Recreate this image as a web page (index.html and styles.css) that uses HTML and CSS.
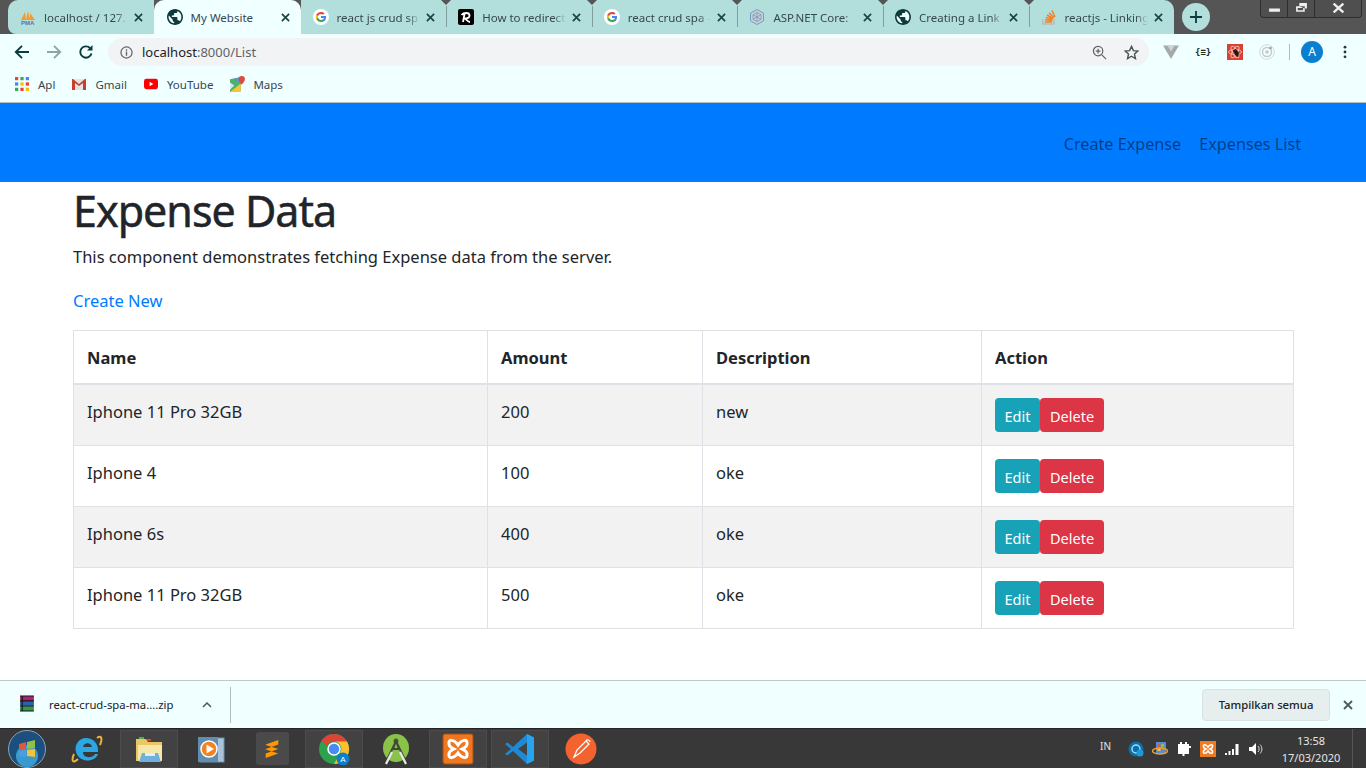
FILE: index.html
```html
<!DOCTYPE html>
<html lang="en">
<head>
    <meta charset="UTF-8">
    <title>My Website</title>
    <link rel="stylesheet" href="styles.css">
</head>
<body>
    <svg class="defs" width="0" height="0">
        <symbol id="i-close" viewBox="0 0 10 10"><path d="M1 1l8 8M9 1l-8 8" fill="none" stroke="currentColor" stroke-width="1.9"/></symbol>
        <symbol id="i-globe" viewBox="2 2 20 20"><circle cx="12" cy="12" r="8.5" fill="#f0ffff"/><path d="M12 2C6.48 2 2 6.48 2 12s4.48 10 10 10 10-4.48 10-10S17.52 2 12 2zm-1 17.93c-3.95-.49-7-3.85-7-7.93 0-.62.08-1.21.21-1.79L9 15v1c0 1.1.9 2 2 2v1.93zm6.9-2.54c-.26-.81-1-1.39-1.9-1.39h-1v-3c0-.55-.45-1-1-1H8v-2h2c.55 0 1-.45 1-1V7h2c1.1 0 2-.9 2-2v-.41c2.93 1.19 5 4.06 5 7.41 0 2.08-.8 3.97-2.1 5.39z" fill="#0d3b3b"/></symbol>
        <symbol id="i-google" viewBox="0 0 16 16"><circle cx="8" cy="8" r="8" fill="#fff"/><path d="M13 8.100c0-.4 0-.7-.1-1H8v2h2.900c-.1.7-.5 1.200-1.100 1.600v1.300h1.700c1-.9 1.500-2.300 1.500-3.900z" fill="#4285f4"/><path d="M8 13c1.400 0 2.600-.5 3.500-1.300l-1.700-1.300c-.5.3-1.100.5-1.800.5-1.400 0-2.500-.9-2.900-2.100H3.300v1.300C4.200 11.900 6 13 8 13z" fill="#34a853"/><path d="M5.100 8.800C4.900 8.200 4.900 7.700 5.100 7.100V5.800H3.300c-.6 1.400-.6 2.900 0 4.300z" fill="#fbbc05"/><path d="M8 5c.8 0 1.500.3 2 .8l1.500-1.500C10.600 3.500 9.400 3 8 3 6 3 4.200 4.100 3.300 5.800l1.800 1.300C5.500 5.900 6.600 5 8 5z" fill="#ea4335"/></symbol>
    </svg>

    <header class="chrome">
        <div class="tabstrip">
            <div class="tab">
                <svg class="fav" viewBox="0 0 16 16"><path d="M1 11L5 3l1 8zM6 11l2-9 2 9zM10 11V4l5 7z" fill="#f29a2e"/><text x="1" y="15.5" font-size="6" font-weight="700" fill="#5b6fa8" font-family="Liberation Sans">PMA</text></svg>
                <span class="tab-title">localhost / 127.</span>
                <svg class="tab-x"><use href="#i-close"/></svg>
            </div>
            <div class="tab tab-active">
                <svg class="fav"><use href="#i-globe"/></svg>
                <span class="tab-title tab-title-full">My Website</span>
                <svg class="tab-x"><use href="#i-close"/></svg>
            </div>
            <div class="tab">
                <svg class="fav"><use href="#i-google"/></svg>
                <span class="tab-title">react js crud sp</span>
                <svg class="tab-x"><use href="#i-close"/></svg>
            </div>
            <div class="tab tab-sep">
                <svg class="fav" viewBox="0 0 16 16"><rect width="16" height="16" rx="2" fill="#000"/><path d="M5 13l1.500-8M3.500 6c2-2.500 8-3 8 .5 0 2.500-3 3-5 3 2 .5 3 3.500 5.500 3.500" fill="none" stroke="#fff" stroke-width="1.8"/></svg>
                <span class="tab-title">How to redirect</span>
                <svg class="tab-x"><use href="#i-close"/></svg>
            </div>
            <div class="tab tab-sep">
                <svg class="fav"><use href="#i-google"/></svg>
                <span class="tab-title">react crud spa -</span>
                <svg class="tab-x"><use href="#i-close"/></svg>
            </div>
            <div class="tab tab-sep">
                <svg class="fav" viewBox="0 0 16 16"><path d="M8 .5l6.500 3.700v7.600L8 15.500l-6.500-3.700V4.200z" fill="#c3d4dc" stroke="#7d97b5"/><path d="M8 3.500l4 2.200v4.600l-4 2.200-4-2.200V5.700zM8 3.500v9M4 5.700l8 4.600M12 5.700l-8 4.600" fill="none" stroke="#7d97b5" stroke-width=".8"/></svg>
                <span class="tab-title">ASP.NET Core:</span>
                <svg class="tab-x"><use href="#i-close"/></svg>
            </div>
            <div class="tab tab-sep">
                <svg class="fav"><use href="#i-globe"/></svg>
                <span class="tab-title">Creating a Link</span>
                <svg class="tab-x"><use href="#i-close"/></svg>
            </div>
            <div class="tab tab-sep tab-last">
                <svg class="fav" viewBox="0 0 16 16"><path d="M2 10v5h11v-5" fill="none" stroke="#bcbbbb" stroke-width="1.5"/><path d="M4 13h7M4.200 10.800l7 .6M4.800 8.500l6.800 1.800M6 6l6 3.500M8 3.800l5 5M11 1.500l3 6.500" fill="none" stroke="#f48024" stroke-width="1.5"/></svg>
                <span class="tab-title">reactjs - Linking</span>
                <svg class="tab-x"><use href="#i-close"/></svg>
            </div>
            <button class="new-tab"><svg viewBox="0 0 14 14"><path d="M7 1v12M1 7h12" stroke="#0d3b3b" stroke-width="1.8"/></svg></button>
            <div class="win-btns">
                <span class="win-btn win-min"><svg viewBox="0 0 12 12"><rect x="1" y="6" width="10" height="3" fill="#eee"/></svg></span>
                <span class="win-btn win-max"><svg viewBox="0 0 12 12"><path d="M4 1h7v5H9v3H1V4h3zM4 4h5v2M2.500 5.500v2h5v-2z" fill="#eee" fill-rule="evenodd"/></svg></span>
                <span class="win-btn win-shut"><svg viewBox="0 0 12 12"><path d="M1.500 1.500l9 8M10.500 1.500l-9 8" stroke="#eee" stroke-width="2.2"/></svg></span>
            </div>
        </div>

        <div class="toolbar">
            <svg class="tool" viewBox="0 0 16 16"><path d="M15 8H2M8 1.800L1.800 8 8 14.200" fill="none" stroke="#0d3b3b" stroke-width="1.9"/></svg>
            <svg class="tool tool-off" viewBox="0 0 16 16"><path d="M1 8h13M8 1.800L14.200 8 8 14.200" fill="none" stroke="#8fa5a5" stroke-width="1.9"/></svg>
            <svg class="tool" viewBox="0 0 16 16"><path d="M13.500 9.500A5.700 5.700 0 1 1 12 4" fill="none" stroke="#0d3b3b" stroke-width="1.9"/><path d="M14.500 1v5.500H9z" fill="#0d3b3b"/></svg>
            <div class="omnibox">
                <svg class="omni-info" viewBox="0 0 14 14"><circle cx="7" cy="7" r="6" fill="none" stroke="#5f6368" stroke-width="1.3"/><path d="M7 6v4.500M7 3.500v1.500" stroke="#5f6368" stroke-width="1.4"/></svg>
                <span class="url">localhost<span class="url-rest">:8000/List</span></span>
                <svg class="omni-zoom" viewBox="0 0 16 16"><circle cx="6.500" cy="6.500" r="5" fill="none" stroke="#5f6368" stroke-width="1.3"/><path d="M10.500 10.500L15 15M4 6.500h5M6.500 4v5" stroke="#5f6368" stroke-width="1.3"/></svg>
                <svg class="omni-star" viewBox="0 0 16 16"><path d="M8 1.500l2 4.500 4.800.5-3.600 3.200 1 4.800L8 12l-4.200 2.500 1-4.800L1.200 6.500 6 6z" fill="none" stroke="#4a5355" stroke-width="1.5"/></svg>
            </div>
            <div class="exts">
                <svg class="ext" viewBox="0 0 16 16"><path d="M0 1.500h16L8 15z" fill="#a6a9a9"/><path d="M4.500 1.500h7L8 7.500z" fill="#d0d4d4"/></svg>
                <span class="ext ext-json">{≡}</span>
                <svg class="ext" viewBox="0 0 16 16"><rect width="16" height="16" fill="#d7412f"/><g fill="none" stroke="#f5b5ab"><ellipse cx="8" cy="8" rx="6.500" ry="2.500"/><ellipse cx="8" cy="8" rx="6.500" ry="2.500" transform="rotate(60 8 8)"/><ellipse cx="8" cy="8" rx="6.500" ry="2.500" transform="rotate(120 8 8)"/></g><path d="M6 6l3-1 3 4-1 4-3-2z" fill="#2b1512"/></svg>
                <svg class="ext" viewBox="0 0 16 16"><circle cx="8" cy="8" r="7.300" fill="none" stroke="#d5d8d8"/><circle cx="8" cy="8" r="4.500" fill="none" stroke="#c5c9c9" stroke-width="1.4"/><circle cx="8" cy="8" r="1.800" fill="#c5c9c9"/><circle cx="11.500" cy="4" r="1.300" fill="#9ba1a1"/></svg>
                <span class="tool-divider"></span>
                <span class="avatar">A</span>
                <svg class="menu-dots" viewBox="0 0 4 16"><circle cx="2" cy="2.500" r="1.600"/><circle cx="2" cy="8" r="1.600"/><circle cx="2" cy="13.500" r="1.600"/></svg>
            </div>
        </div>

        <div class="bookmarks">
            <a class="bm">
                <svg class="bm-ic" viewBox="0 0 13 13"><g fill="#ea4335"><rect width="3" height="3"/><rect x="5" y="5" width="3" height="3" fill="#fbbc05"/></g><rect x="5" width="3" height="3" fill="#34a853"/><rect x="10" width="3" height="3" fill="#4285f4"/><rect y="5" width="3" height="3" fill="#4285f4"/><rect x="10" y="5" width="3" height="3" fill="#ea4335"/><rect y="10" width="3" height="3" fill="#34a853"/><rect x="5" y="10" width="3" height="3" fill="#ea4335"/><rect x="10" y="10" width="3" height="3" fill="#fbbc05"/></svg>
                Apl
            </a>
            <a class="bm">
                <svg class="bm-ic" viewBox="0 0 14 12"><path d="M0 1h14v11H0z" fill="#e4e4e4"/><path d="M0 1v11h3V5l4 3 4-3v7h3V1h-1L7 6 1 1z" fill="#c5402f"/></svg>
                Gmail
            </a>
            <a class="bm">
                <svg class="bm-ic" viewBox="0 0 15 11"><rect width="15" height="11" rx="2.500" fill="#f00"/><path d="M6 3l4 2.500L6 8z" fill="#fff"/></svg>
                YouTube
            </a>
            <a class="bm">
                <svg class="bm-ic bm-maps" viewBox="0 0 15 15"><path d="M0 3l10-2v13L0 15z" fill="#4db36a"/><path d="M0 15l10-8v8z" fill="#f6c532"/><path d="M0 6l4 3-4 4z" fill="#dbe7f3"/><path d="M4 2l6 6V2z" fill="#5a94e8"/><path d="M11 0a3 3 0 0 1 3 3c0 2-3 5-3 5s-3-3-3-5a3 3 0 0 1 3-3z" fill="#dd4b3e"/></svg>
                Maps
            </a>
        </div>
    </header>

    <nav class="site-nav">
        <a class="nav-link">Create Expense</a>
        <a class="nav-link">Expenses List</a>
    </nav>

    <main class="content">
        <h1>Expense Data</h1>
        <p class="lead">This component demonstrates fetching Expense data from the server.</p>
        <a class="create-link">Create New</a>

        <table class="data-table">
            <colgroup>
                <col class="col-name">
                <col class="col-amount">
                <col class="col-desc">
                <col>
            </colgroup>
            <thead>
                <tr><th>Name</th><th>Amount</th><th>Description</th><th>Action</th></tr>
            </thead>
            <tbody>
                <tr>
                    <td>Iphone 11 Pro 32GB</td><td>200</td><td>new</td>
                    <td class="cell-actions"><button class="btn btn-edit">Edit</button><button class="btn btn-delete">Delete</button></td>
                </tr>
                <tr>
                    <td>Iphone 4</td><td>100</td><td>oke</td>
                    <td class="cell-actions"><button class="btn btn-edit">Edit</button><button class="btn btn-delete">Delete</button></td>
                </tr>
                <tr>
                    <td>Iphone 6s</td><td>400</td><td>oke</td>
                    <td class="cell-actions"><button class="btn btn-edit">Edit</button><button class="btn btn-delete">Delete</button></td>
                </tr>
                <tr>
                    <td>Iphone 11 Pro 32GB</td><td>500</td><td>oke</td>
                    <td class="cell-actions"><button class="btn btn-edit">Edit</button><button class="btn btn-delete">Delete</button></td>
                </tr>
            </tbody>
        </table>
    </main>

    <div class="download-bar">
        <svg class="dl-icon" viewBox="0 0 16 16"><rect x="1" y="1" width="13" height="4.500" fill="#a8246e"/><rect x="1" y="5.700" width="13" height="4.500" fill="#2d5fb0"/><rect x="1" y="10.500" width="13" height="4.500" fill="#2f9a4a"/><path d="M1 1h13M1 5.500h13M1 10.300h13M1 15h13M3 1v14" stroke="#111" fill="none"/></svg>
        <span class="dl-name">react-crud-spa-ma....zip</span>
        <svg class="dl-chevron" viewBox="0 0 10 6"><path d="M1 5l4-4 4 4" fill="none" stroke="#4a5a5a" stroke-width="1.5"/></svg>
        <span class="dl-divider"></span>
        <button class="dl-all">Tampilkan semua</button>
        <svg class="dl-close"><use href="#i-close"/></svg>
    </div>

    <footer class="taskbar">
        <svg class="orb" viewBox="0 0 38 38">
            <circle cx="19" cy="19" r="18.5" fill="#1c4f7d" stroke="#8aa3b5"/>
            <circle cx="19" cy="26" r="11" fill="#3a9ad0"/>
            <path d="M11 14l7-2v7l-7 1z" fill="#e2563a"/><path d="M19 12l8-2v8l-8 1z" fill="#8fc04a"/><path d="M11 21l7-1v7l-7-1z" fill="#4c9ee0"/><path d="M19 20l8-1v8l-8-1z" fill="#f4c33d"/>
        </svg>
        <span class="task task-plain">
            <svg class="task-ic" viewBox="0 0 32 32"><path d="M26 5c4-3 6 0 3 7M7 26c-5 5-7 2-4-5" fill="none" stroke="#e8b53a" stroke-width="2"/><path fill-rule="evenodd" d="M15 5c7 0 12 5 12 12v2H12c0 6 9 7 12 2h3c-3 9-19 9-22-2-2-7 3-14 10-14zM12 14h9c-1-5-8-5-9 0z" fill="#2ba7e6"/></svg>
        </span>
        <span class="task">
            <svg class="task-ic" viewBox="0 0 32 32"><path d="M3 6h10l2 3h14v19H3z" fill="#e9c766"/><path d="M5 12h24v16H5z" fill="#f7e7a8"/><path d="M9 20h16l3 9H6z" fill="#6fb1dd"/><rect x="12" y="20" width="10" height="3" fill="#dfeefa"/><rect x="6" y="4" width="5" height="2" fill="#4db04a"/><rect x="14" y="6" width="4" height="2" fill="#d9482c"/></svg>
        </span>
        <span class="task task-plain">
            <svg class="task-ic" viewBox="0 0 32 32"><rect x="5" y="5" width="24" height="24" fill="#a9c4da" stroke="#6f93b0"/><rect x="3" y="4" width="20" height="25" fill="#5f8db3"/><circle cx="14" cy="16" r="8" fill="#f4821f" stroke="#fff" stroke-width="1.5"/><path d="M11.500 11.500l7.500 4.500-7.500 4.500z" fill="#fff"/></svg>
        </span>
        <span class="task task-plain">
            <span class="sublime">
                <svg viewBox="0 0 20 24"><path d="M3 7l14-5v5L3 12zM17 12L3 7.500v5l14 4.500zM3 17l14-5v5L3 22z" fill="#ff9800"/></svg>
            </span>
        </span>
        <span class="task">
            <svg class="task-ic" viewBox="0 0 32 32"><circle cx="16" cy="16" r="15" fill="#2da24c"/><path d="M16 1a15 15 0 0 1 13 7.500H16a7.500 7.500 0 0 0-7 4.800L3.500 8A15 15 0 0 1 16 1z" fill="#db4437"/><path d="M29 8.500A15 15 0 0 1 16 31l6.500-11.500A7.500 7.500 0 0 0 16 8.500z" fill="#fbc02d"/><circle cx="16" cy="16" r="6" fill="#4a8af4" stroke="#fff" stroke-width="1.5"/><circle cx="25" cy="26" r="6.500" fill="#0b7fce"/><text x="25" y="29" font-size="8" fill="#fff" text-anchor="middle" font-family="Liberation Sans">A</text></svg>
        </span>
        <span class="task task-plain">
            <svg class="task-ic" viewBox="0 0 32 32"><ellipse cx="16" cy="15" rx="13" ry="14" fill="#8bc34a"/><circle cx="16" cy="8" r="2.500" fill="#4b5b3c"/><path d="M16 8l-3 8h6zM7 27l9-19 9 19" fill="none" stroke="#3f4a39" stroke-width="2"/><path d="M6 31l6-12M26 31l-6-12" stroke="#e8ece6" stroke-width="2.2"/></svg>
        </span>
        <span class="task">
            <svg class="task-ic" viewBox="0 0 32 32"><rect x="1" y="1" width="30" height="30" rx="2" fill="#f0761f" stroke="#a34f16"/><path d="M16 12C12 6 6 6 7 11c0 3 3 4 5 5-2 1-5 2-5 5-1 5 5 5 9-1 4 6 10 6 9 1 0-3-3-4-5-5 2-1 5-2 5-5 1-5-5-5-9 1z" fill="none" stroke="#fff" stroke-width="3"/></svg>
        </span>
        <span class="task">
            <svg class="task-ic" viewBox="0 0 32 32"><path d="M23 1l7 3.500v23L23 31 9 18l-5.500 4.500L1 21l6-5-6-5 2.500-1.500L9 14zM23 9.500L14 16l9 6.500z" fill="#1e8ad6" fill-rule="evenodd"/><path d="M23 1l7 3.500v23L23 31z" fill="#27a4ee"/></svg>
        </span>
        <span class="task task-plain">
            <svg class="task-ic" viewBox="0 0 32 32"><circle cx="16" cy="16" r="15.5" fill="#f4622f"/><path d="M9 24l3-7 9-9 3 3-9 9zM21 8c1-2 4-1 4 1" fill="none" stroke="#fff" stroke-width="1.3"/></svg>
        </span>

        <div class="tray">
            <span class="tray-lang">IN</span>
            <svg class="tray-ic" viewBox="0 0 16 16"><circle cx="8" cy="8" r="7.5" fill="#0d6fa8"/><circle cx="8" cy="8" r="4" fill="none" stroke="#9fdcf7" stroke-width="1.5"/><circle cx="12" cy="12" r="3.5" fill="#1a9ad6"/></svg>
            <svg class="tray-ic" viewBox="0 0 16 16"><rect x="4" y="1" width="10" height="12" fill="#4d8fd8"/><rect x="5.500" y="3" width="3" height="3" fill="#e2563a"/><rect x="9" y="3" width="3" height="3" fill="#8fc04a"/><rect x="5.500" y="7" width="3" height="3" fill="#f4c33d"/><ellipse cx="8" cy="10" rx="7.5" ry="3" fill="none" stroke="#f39c2d" stroke-width="1.5"/></svg>
            <svg class="tray-ic" viewBox="0 0 16 16"><path d="M3 4h9v8H3zM5 1v3M10 1v3M7.500 12v3" fill="none" stroke="#fff" stroke-width="2"/><path d="M12 5h3v2h-3z" fill="#fff"/><rect x="4" y="5" width="7" height="6" fill="#fff"/></svg>
            <svg class="tray-ic" viewBox="0 0 16 16"><rect width="16" height="16" fill="#ef7a22"/><path d="M8 6C6 3 3 3 3.500 5.500 3.500 7 5 7.500 6 8 5 8.500 3.500 9 3.500 10.500 3 13 6 13 8 10c2 3 5 3 4.500.5 0-1.500-1.500-2-2.500-2.500 1-.5 2.500-1 2.500-2.500C13 3 10 3 8 6z" fill="none" stroke="#fff" stroke-width="1.6"/></svg>
            <svg class="tray-ic" viewBox="0 0 16 16"><path d="M1 12h2v2H1zM4.500 10h2v4h-2zM8 8h2v6H8zM11.500 3h3v11h-3z" fill="#fff"/></svg>
            <svg class="tray-ic" viewBox="0 0 16 16"><path d="M1 6h3l4-4v12l-4-4H1z" fill="#fff"/><path d="M10 5c1.500 1.500 1.500 4.500 0 6M12 3.500c2.500 2.500 2.500 6.500 0 9" fill="none" stroke="#ddd"/></svg>
            <div class="clock"><span>13:58</span><span>17/03/2020</span></div>
            <span class="show-desktop"></span>
        </div>
    </footer>
</body>
</html>
```

FILE: styles.css
```css
/* General Reset */
body {
    margin: 0;
    height: 768px;
    overflow: hidden;
    display: flex;
    flex-direction: column;
    font-family: "Noto Sans", "Open Sans", sans-serif;
    background-color: #fff;
    color: #212529;
}

.defs {
    position: absolute;
}

svg {
    display: block;
    flex: none;
}

/* Browser tabs */
.chrome {
    background-color: #f0ffff;
    border-bottom: 1px solid #b5bcbc;
}

.tabstrip {
    height: 34px;
    display: flex;
    padding-left: 8px;
    background-color: #555;
    position: relative;
}

.tab {
    width: 145.6px;
    box-sizing: border-box;
    padding: 0 11px 0 12px;
    display: flex;
    align-items: center;
    background-color: #b2dfdc;
    color: #0d3b3b;
    position: relative;
}

.tabstrip > .tab:first-child {
    border-radius: 10px 0 0 8px;
}

.tab-active {
    background-color: #f0ffff;
    border-radius: 10px 10px 0 0;
    width: 147px;
    padding-left: 13px;
}

.tab-sep::before {
    content: "";
    position: absolute;
    left: 0;
    top: 6px;
    bottom: 7px;
    border-left: 1px solid #7f9e9c;
}

.tab-sep::after {
    content: "";
    position: absolute;
    left: -5px;
    top: 0;
    border: 5px solid transparent;
    border-top-color: #555;
    border-bottom-width: 0;
}

.tab-last {
    border-radius: 0 10px 0 0;
}

.fav {
    width: 16px;
    height: 16px;
}

.tab-title {
    flex: 1;
    min-width: 0;
    margin-left: 8px;
    font-size: 11.5px;
    white-space: nowrap;
    color: #37474f;
    -webkit-mask-image: linear-gradient(to right, #000 85%, transparent);
    mask-image: linear-gradient(to right, #000 85%, transparent);
}

.tab-title-full {
    -webkit-mask-image: none;
    mask-image: none;
}

.tab-x {
    width: 9px;
    height: 9px;
    margin-left: 6px;
    color: #1d4444;
}

.new-tab {
    width: 28px;
    height: 28px;
    margin: 3px 0 0 8px;
    padding: 7px;
    border: none;
    border-radius: 50%;
    background-color: #b2dfdc;
}

.win-btns {
    margin-left: auto;
    margin-right: 4px;
    height: 17px;
    display: flex;
    border: 1px solid #2e2e2e;
    border-top: none;
    border-radius: 0 0 4px 4px;
    background-color: #4f4f4f;
}

.win-btn {
    display: flex;
    align-items: center;
    justify-content: center;
    border-right: 1px solid #2e2e2e;
}

.win-btn svg {
    width: 13px;
    height: 13px;
}

.win-min,
.win-max {
    width: 26px;
}

.win-shut {
    width: 46px;
    border-right: none;
}

/* Address bar */
.toolbar {
    height: 34px;
    box-sizing: border-box;
    display: flex;
    align-items: center;
    padding: 2px 0 0 14px;
}

.tool {
    width: 16px;
    height: 16px;
    margin-right: 16px;
}

.omnibox {
    width: 1041px;
    height: 28px;
    margin-left: -2px;
    border-radius: 14px;
    background-color: #f1f3f4;
    display: flex;
    align-items: center;
    padding: 0 10px 0 12px;
    box-sizing: border-box;
}

.omni-info {
    width: 13px;
    height: 13px;
}

.url {
    margin-left: 9px;
    font-size: 13px;
    color: #202124;
}

.url-rest {
    color: #5f6368;
}

.omni-zoom {
    width: 15px;
    height: 15px;
    margin-left: auto;
}

.omni-star {
    width: 15px;
    height: 15px;
    margin-left: 17px;
}

.exts {
    display: flex;
    align-items: center;
    margin-left: 14px;
}

.ext {
    width: 16px;
    height: 16px;
    margin-right: 16px;
}

.ext-json {
    font: 700 9px "DejaVu Sans Mono", monospace;
    line-height: 16px;
    text-align: center;
    color: #1b2a2a;
}

.tool-divider {
    width: 1px;
    height: 16px;
    margin: 0 11px 0 -2px;
    background-color: #b5bcbc;
}

.avatar {
    width: 22px;
    height: 22px;
    border-radius: 50%;
    background-color: #0a7fcf;
    color: #fff;
    font-size: 12px;
    line-height: 22px;
    text-align: center;
}

.menu-dots {
    width: 4px;
    height: 14px;
    margin-left: 20px;
    fill: #1d3c3c;
}

/* Bookmarks */
.bookmarks {
    height: 34px;
    box-sizing: border-box;
    display: flex;
    align-items: center;
    padding: 0 0 2px 15px;
}

.bm {
    display: flex;
    align-items: center;
    margin-right: 17px;
    font-size: 11.5px;
    color: #37474f;
}

.bm-ic {
    width: 14px;
    height: 14px;
    margin-right: 9px;
}

.bm-maps {
    width: 16px;
    height: 16px;
    margin-right: 7px;
}

/* Site header */
.site-nav {
    height: 79px;
    flex: none;
    display: flex;
    justify-content: flex-end;
    align-items: center;
    gap: 18px;
    padding: 2px 65px 0 0;
    box-sizing: border-box;
    background-color: #007bff;
}

.nav-link {
    font-size: 16.2px;
    color: rgba(0, 0, 0, 0.5);
}

/* Page content */
.content {
    flex: 1;
    min-height: 0;
    padding: 0 72px 0 73px;
}

h1 {
    margin: 0;
    font-size: 43px;
    font-weight: 400;
    letter-spacing: -1px;
    -webkit-text-stroke: 0.5px #212529;
    line-height: 57px;
}

.lead {
    margin: 4px 0 17px;
    font-size: 16.5px;
    line-height: 27px;
}

.create-link {
    display: block;
    font-size: 16.5px;
    line-height: 27px;
    color: #007bff;
}

.data-table {
    width: 1221px;
    margin-top: 16px;
    border-collapse: collapse;
    table-layout: fixed;
    font-size: 16.5px;
}

.col-name {
    width: 414px;
}

.col-amount {
    width: 215px;
}

.col-desc {
    width: 279px;
}

.data-table th,
.data-table td {
    border: 1px solid #dee2e6;
    padding: 0 13px;
    text-align: left;
}

.data-table th {
    height: 52px;
    border-bottom-width: 2px;
    font-weight: 700;
}

.data-table td {
    height: 61px;
    vertical-align: top;
    padding-top: 15px;
    box-sizing: border-box;
}

.data-table td.cell-actions {
    padding-top: 13px;
}

.data-table tbody tr:nth-child(odd) {
    background-color: #f2f2f2;
}

.btn {
    height: 34px;
    border: none;
    border-radius: 4px;
    padding: 2px 10px 0;
    color: #fff;
    font: 14.5px "Noto Sans", sans-serif;
}

.btn-edit {
    width: 45px;
    padding: 2px 0 0;
    background-color: #17a2b8;
}

.btn-delete {
    background-color: #dc3545;
}

/* Downloads */
.download-bar {
    height: 48px;
    flex: none;
    display: flex;
    align-items: center;
    padding: 0 13px 0 19px;
    box-sizing: border-box;
    background-color: #f0ffff;
    border-top: 1px solid #c0c8c8;
}

.dl-icon {
    width: 17px;
    height: 17px;
    margin-top: -2px;
}

.dl-name {
    margin-left: 13px;
    font-size: 11.3px;
    color: #202124;
    width: 145px;
}

.dl-chevron {
    width: 10px;
    height: 6px;
    margin-left: 8px;
}

.dl-divider {
    width: 1px;
    height: 36px;
    margin-left: 18px;
    background-color: #b5bcbc;
}

.dl-all {
    margin-left: auto;
    width: 128px;
    height: 32px;
    border: 1px solid #d8e2e2;
    border-radius: 4px;
    background-color: #e6eeee;
    color: #202124;
    font: 500 11.3px "Noto Sans", sans-serif;
}

.dl-close {
    width: 10px;
    height: 10px;
    margin-left: 13px;
    color: #4a6060;
}

/* Windows taskbar */
.taskbar {
    height: 40px;
    flex: none;
    display: flex;
    align-items: center;
    background-color: #383838;
    border-top: 1px solid #252525;
    box-sizing: border-box;
    padding-left: 8px;
}

.orb {
    width: 38px;
    height: 38px;
    margin-right: 12px;
}

.task {
    width: 58px;
    height: 38px;
    display: flex;
    align-items: center;
    justify-content: center;
    border: 1px solid #4c4c4c;
    box-sizing: border-box;
    background-color: #424242;
    margin-right: 3.8px;
}

.task-plain {
    background: none;
    border-color: transparent;
}

.task-ic {
    width: 32px;
    height: 32px;
}

.sublime {
    width: 33px;
    height: 33px;
    display: flex;
    align-items: center;
    justify-content: center;
    background-color: #4a4a4a;
    border-radius: 3px;
}

.sublime svg {
    width: 18px;
    height: 22px;
}

.tray {
    margin-left: auto;
    display: flex;
    align-items: center;
    color: #e6e6e6;
}

.tray-lang {
    font-size: 10px;
    margin: -6px 17px 0 0;
}

.tray-ic {
    width: 16px;
    height: 16px;
    margin-right: 8px;
}

.clock {
    width: 76px;
    margin: 1px 3px 0 1px;
    display: flex;
    flex-direction: column;
    align-items: center;
    font-size: 11px;
    line-height: 17px;
}

.show-desktop {
    width: 13px;
    height: 39px;
    border-left: 1px solid #555;
}
```
